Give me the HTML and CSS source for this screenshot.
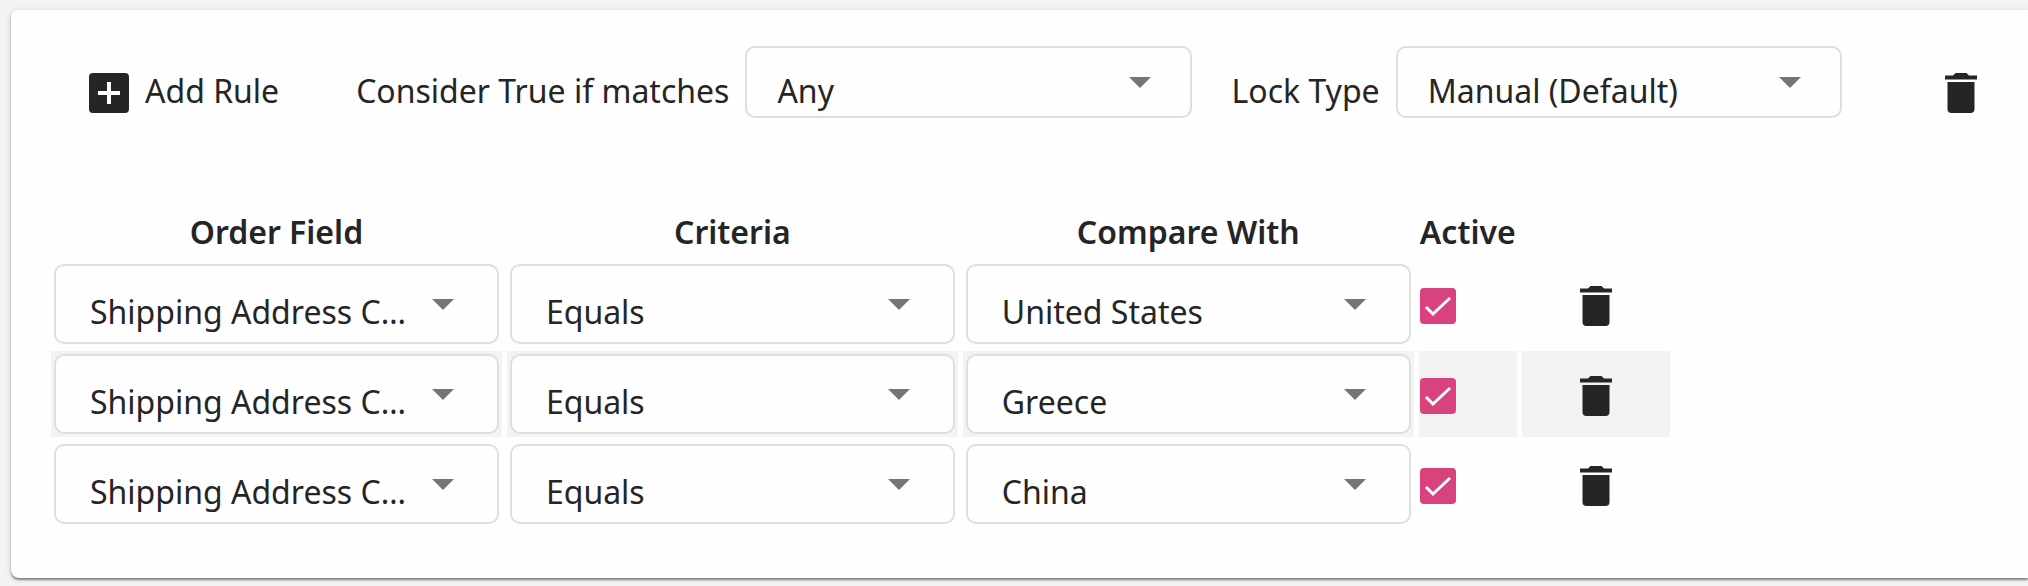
FILE: index.html
```
<!DOCTYPE html>
<html lang="en">
<head>
    <meta charset="UTF-8">
    <meta name="viewport" content="width=device-width, initial-scale=1.0">
    <title>Order Lock Rules</title>
    <link rel="stylesheet" href="styles.css">
</head>
<body>
    <!-- Shared icons -->
    <svg class="icon-defs" aria-hidden="true">
        <symbol id="icon-trash" viewBox="0 0 32 40">
            <path d="M0 2.500h8L10.500 0h11L24 2.500h8v4H0zM2.500 9h27v27a4 4 0 0 1-4 4h-19a4 4 0 0 1-4-4z"/>
        </symbol>
        <symbol id="icon-add" viewBox="0 0 40 40">
            <path fill-rule="evenodd" d="M4 0h32a4 4 0 0 1 4 4v32a4 4 0 0 1-4 4H4a4 4 0 0 1-4-4V4a4 4 0 0 1 4-4zM18 9v9H9v4h9v9h4v-9h9v-4h-9V9z"/>
        </symbol>
    </svg>

    <main class="rule-card">
        <div class="toolbar">
            <button type="button" class="add-button">
                <svg class="icon-add"><use href="#icon-add"/></svg>
                Add Rule
            </button>
            <div class="field">
                <label for="matchType">Consider True if matches</label>
                <select id="matchType" class="select">
                    <option>Any</option>
                    <option>All</option>
                </select>
            </div>
            <div class="field">
                <label for="lockType">Lock Type</label>
                <select id="lockType" class="select">
                    <option>Manual (Default)</option>
                </select>
            </div>
            <button type="button" class="icon-button toolbar-delete" aria-label="Delete rule group">
                <svg class="icon-trash"><use href="#icon-trash"/></svg>
            </button>
        </div>

        <table class="rules-table">
            <thead>
                <tr>
                    <th>Order Field</th>
                    <th>Criteria</th>
                    <th>Compare With</th>
                    <th class="col-active">Active</th>
                    <th class="col-delete"></th>
                </tr>
            </thead>
            <tbody>
                <tr>
                    <td><select class="select" aria-label="Order Field"><option>Shipping Address Country</option></select></td>
                    <td><select class="select" aria-label="Criteria"><option>Equals</option></select></td>
                    <td><select class="select" aria-label="Compare With"><option>United States</option></select></td>
                    <td class="cell-active"><input type="checkbox" class="checkbox" aria-label="Active" checked></td>
                    <td class="cell-delete">
                        <button type="button" class="icon-button" aria-label="Delete rule"><svg class="icon-trash"><use href="#icon-trash"/></svg></button>
                    </td>
                </tr>
                <tr>
                    <td><select class="select" aria-label="Order Field"><option>Shipping Address Country</option></select></td>
                    <td><select class="select" aria-label="Criteria"><option>Equals</option></select></td>
                    <td><select class="select" aria-label="Compare With"><option>Greece</option></select></td>
                    <td class="cell-active"><input type="checkbox" class="checkbox" aria-label="Active" checked></td>
                    <td class="cell-delete">
                        <button type="button" class="icon-button" aria-label="Delete rule"><svg class="icon-trash"><use href="#icon-trash"/></svg></button>
                    </td>
                </tr>
                <tr>
                    <td><select class="select" aria-label="Order Field"><option>Shipping Address Country</option></select></td>
                    <td><select class="select" aria-label="Criteria"><option>Equals</option></select></td>
                    <td><select class="select" aria-label="Compare With"><option>China</option></select></td>
                    <td class="cell-active"><input type="checkbox" class="checkbox" aria-label="Active" checked></td>
                    <td class="cell-delete">
                        <button type="button" class="icon-button" aria-label="Delete rule"><svg class="icon-trash"><use href="#icon-trash"/></svg></button>
                    </td>
                </tr>
            </tbody>
        </table>
    </main>
</body>
</html>
```
FILE: styles.css
```
* {
    margin: 0;
    padding: 0;
    box-sizing: border-box;
}

body {
    font-family: 'Noto Sans', 'Open Sans', sans-serif;
    font-size: 32px;
    line-height: 40px;
    color: #252525;
    background: #f3f3f3;
    padding: 10px 0 8px 11px;
}

button,
select {
    font: inherit;
    color: inherit;
}

.icon-defs {
    display: none;
}

.rule-card {
    background: #fefefe;
    border-radius: 8px 0 0 8px;
    padding: 36px 43px 47px 35px;
    box-shadow: 0 2px 2px rgba(0,0,0,0.4), 0 1px 6px rgba(0,0,0,0.15);
}

/* Toolbar */
.toolbar {
    display: flex;
    align-items: center;
    padding-left: 43px;
    margin-bottom: 90px;
}

.add-button {
    display: flex;
    align-items: center;
    gap: 16px;
    margin-right: 77px;
    padding-top: 18px;
    background: none;
    border: none;
    white-space: nowrap;
    cursor: pointer;
}

.icon-add {
    width: 40px;
    height: 40px;
    margin-top: 4px;
    fill: #252525;
}

.field {
    display: flex;
    align-items: center;
    gap: 16px;
    margin-right: 40px;
    white-space: nowrap;
}

.field label {
    padding-top: 18px;
}

.select {
    appearance: none;
    width: 100%;
    height: 80px;
    padding: 16px 76px 0 34px;
    border: 2px solid #dedede;
    border-radius: 10px;
    background: #fefefe url("data:image/svg+xml,%3Csvg xmlns='http://www.w3.org/2000/svg' width='22' height='11'%3E%3Cpath d='M0 0h22L11 11z' fill='%23757575'/%3E%3C/svg%3E") no-repeat right 43px top 33px;
    text-overflow: ellipsis;
}

.field .select {
    width: 22vw;
    height: 72px;
    padding: 18px 64px 0 30px;
    background-position: right 39px top 29px;
}

.icon-button {
    display: flex;
    padding: 0 8px;
    background: none;
    border: none;
    cursor: pointer;
}

.icon-trash {
    width: 32px;
    height: 40px;
    fill: #252525;
}

.toolbar-delete {
    margin-left: auto;
    padding-top: 22px;
}

/* Rules table */
.rules-table {
    width: 84%;
    table-layout: fixed;
    border-collapse: separate;
    border-spacing: 5px 4px;
}

.rules-table th {
    height: 45px;
    font-weight: 600;
    vertical-align: top;
}

.rules-table td {
    height: 86px;
    padding: 3px;
    vertical-align: middle;
}

.rules-table tbody tr:nth-child(even) td {
    background: #f3f3f3;
}

.rules-table .col-active {
    width: 98px;
}

.rules-table .col-delete {
    width: 148px;
}

.rules-table .cell-active,
.rules-table .cell-delete {
    padding: 5px 1px 1px;
}

.rules-table .select,
.checkbox {
    display: block;
}

.checkbox {
    appearance: none;
    width: 36px;
    height: 36px;
    border-radius: 4px;
    background: #d9437d url("data:image/svg+xml,%3Csvg xmlns='http://www.w3.org/2000/svg' viewBox='0 0 36 36'%3E%3Cpath d='M6 19l7 7L30 10' fill='none' stroke='%23fefefe' stroke-width='3'/%3E%3C/svg%3E") no-repeat center;
}

.cell-delete .icon-button {
    margin: 0 auto;
}
```
